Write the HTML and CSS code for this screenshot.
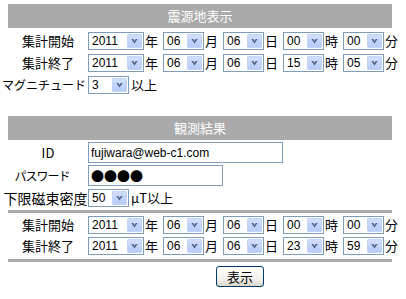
FILE: index.html
```html
<!DOCTYPE html>
<html lang="ja">
<head>
  <meta charset="UTF-8">
  <title>震源地表示</title>
  <link rel="stylesheet" href="styles.css">
</head>
<body>
  <div class="page">
    <div class="sec-head">震源地表示</div>

    <div class="row">
      <div class="label pad">集計開始</div>
      <div class="fields">
        <div class="sel year"><span class="val">2011</span><i class="drop"></i></div><span class="unit">年</span>
        <div class="sel"><span class="val">06</span><i class="drop"></i></div><span class="unit">月</span>
        <div class="sel"><span class="val">06</span><i class="drop"></i></div><span class="unit">日</span>
        <div class="sel"><span class="val">00</span><i class="drop"></i></div><span class="unit">時</span>
        <div class="sel"><span class="val">00</span><i class="drop"></i></div><span class="unit">分</span>
      </div>
    </div>
    <div class="row">
      <div class="label pad">集計終了</div>
      <div class="fields">
        <div class="sel year"><span class="val">2011</span><i class="drop"></i></div><span class="unit">年</span>
        <div class="sel"><span class="val">06</span><i class="drop"></i></div><span class="unit">月</span>
        <div class="sel"><span class="val">06</span><i class="drop"></i></div><span class="unit">日</span>
        <div class="sel"><span class="val">15</span><i class="drop"></i></div><span class="unit">時</span>
        <div class="sel"><span class="val">05</span><i class="drop"></i></div><span class="unit">分</span>
      </div>
    </div>
    <div class="row">
      <div class="label kana">マグニチュード</div>
      <div class="fields">
        <div class="sel"><span class="val">3</span><i class="drop"></i></div><span class="suffix">以上</span>
      </div>
    </div>

    <div class="sec-head second">観測結果</div>

    <div class="row tall">
      <div class="label pad">ID</div>
      <div class="fields">
        <input class="text id" type="text" value="fujiwara@web-c1.com">
      </div>
    </div>
    <div class="row tall">
      <div class="label kana narrow">パスワード</div>
      <div class="fields">
        <input class="text pw" type="text" value="●●●●">
      </div>
    </div>
    <div class="row mid">
      <div class="label big">下限磁束密度</div>
      <div class="fields">
        <div class="sel"><span class="val">50</span><i class="drop"></i></div><span class="suffix">μT以上</span>
      </div>
    </div>

    <div class="rule"></div>

    <div class="row after-rule">
      <div class="label pad">集計開始</div>
      <div class="fields">
        <div class="sel year"><span class="val">2011</span><i class="drop"></i></div><span class="unit">年</span>
        <div class="sel"><span class="val">06</span><i class="drop"></i></div><span class="unit">月</span>
        <div class="sel"><span class="val">06</span><i class="drop"></i></div><span class="unit">日</span>
        <div class="sel"><span class="val">00</span><i class="drop"></i></div><span class="unit">時</span>
        <div class="sel"><span class="val">00</span><i class="drop"></i></div><span class="unit">分</span>
      </div>
    </div>
    <div class="row after-rule">
      <div class="label pad">集計終了</div>
      <div class="fields">
        <div class="sel year"><span class="val">2011</span><i class="drop"></i></div><span class="unit">年</span>
        <div class="sel"><span class="val">06</span><i class="drop"></i></div><span class="unit">月</span>
        <div class="sel"><span class="val">06</span><i class="drop"></i></div><span class="unit">日</span>
        <div class="sel"><span class="val">23</span><i class="drop"></i></div><span class="unit">時</span>
        <div class="sel"><span class="val">59</span><i class="drop"></i></div><span class="unit">分</span>
      </div>
    </div>

    <div class="rule second"></div>

    <div class="row btn-row">
      <div class="label"></div>
      <div class="fields center">
        <button type="button">表示</button>
      </div>
    </div>
  </div>
</body>
</html>
```

FILE: styles.css
```css
body {
  margin: 0;
  font-family: "Noto Sans CJK JP", sans-serif;
  font-size: 13px;
  color: #000;
  background-color: #fff;
}

.page {
  width: 392px;
  padding-top: 4px;
}

.sec-head {
  margin-left: 8px;
  height: 24px;
  line-height: 24px;
  background-color: #aaa;
  color: #fff;
  text-align: center;
  font-size: 13px;
}

.sec-head.second {
  margin-top: 22px;
}

.row {
  display: flex;
  align-items: center;
  height: 18px;
  margin-top: 4px;
}

.row.tall {
  height: 21px;
  margin-top: 2px;
}

.row.mid {
  margin-top: 3px;
}

.row.after-rule {
  margin-top: 3px;
}

.row.btn-row {
  height: 21px;
  margin-top: 4px;
}

.label {
  width: 88px;
  flex: none;
  box-sizing: border-box;
  text-align: center;
  white-space: nowrap;
  line-height: 18px;
}

.label.pad {
  padding-left: 8px;
}

.label.kana {
  font-size: 12px;
}

.label.narrow {
  letter-spacing: -1px;
  padding-right: 4px;
}

.label.big {
  font-size: 14px;
  padding-left: 3px;
}

.fields {
  display: flex;
  align-items: center;
}

.fields.center {
  flex: 1;
  justify-content: center;
}

.sel {
  display: flex;
  width: 41px;
  height: 18px;
  box-sizing: border-box;
  border: 1px solid #7f9db9;
  background-color: #fff;
  font-family: "Liberation Sans", sans-serif;
  font-size: 12px;
}

.sel.year {
  width: 56px;
}

.sel .val {
  flex: 1;
  padding-left: 3px;
  line-height: 16px;
}

.sel .drop {
  display: flex;
  justify-content: center;
  align-items: center;
  width: 15px;
  margin: 1px;
  box-sizing: border-box;
  border: 1px solid #c4d4f8;
  border-radius: 1px;
  background: linear-gradient(#d2defd, #b6cbf7);
}

.sel .drop::after {
  content: "";
  width: 7px;
  height: 5px;
  background-color: #4d6185;
  clip-path: polygon(0 0, 2px 0, 3.5px 2.5px, 5px 0, 7px 0, 3.5px 5px);
}

.unit {
  width: 13px;
  margin: 0 5px 0 1px;
  line-height: 18px;
}

.suffix {
  margin-left: 2px;
  line-height: 18px;
}

.text {
  height: 21px;
  box-sizing: border-box;
  margin: 0;
  padding: 0 2px;
  border: 1px solid #7f9db9;
  background-color: #fff;
  font-family: "Liberation Sans", sans-serif;
  font-size: 12px;
  color: #000;
  outline: none;
}

.text.id {
  width: 195px;
}

.text.pw {
  width: 135px;
  font-family: "Noto Sans CJK JP", sans-serif;
  font-size: 13px;
  letter-spacing: 0;
}

.rule {
  margin: 3px 0 0 8px;
  height: 0;
  border-top: 3px solid #aaa;
}

.rule.second {
  margin-top: 4px;
}

button {
  width: 48px;
  height: 21px;
  padding: 0;
  border: 1px solid #003c74;
  border-radius: 3px;
  background: linear-gradient(#ffffff, #f4f3ee 60%, #d9d5c8);
  font-family: "Noto Sans CJK JP", sans-serif;
  font-size: 13px;
  line-height: 19px;
  color: #000;
}
```
